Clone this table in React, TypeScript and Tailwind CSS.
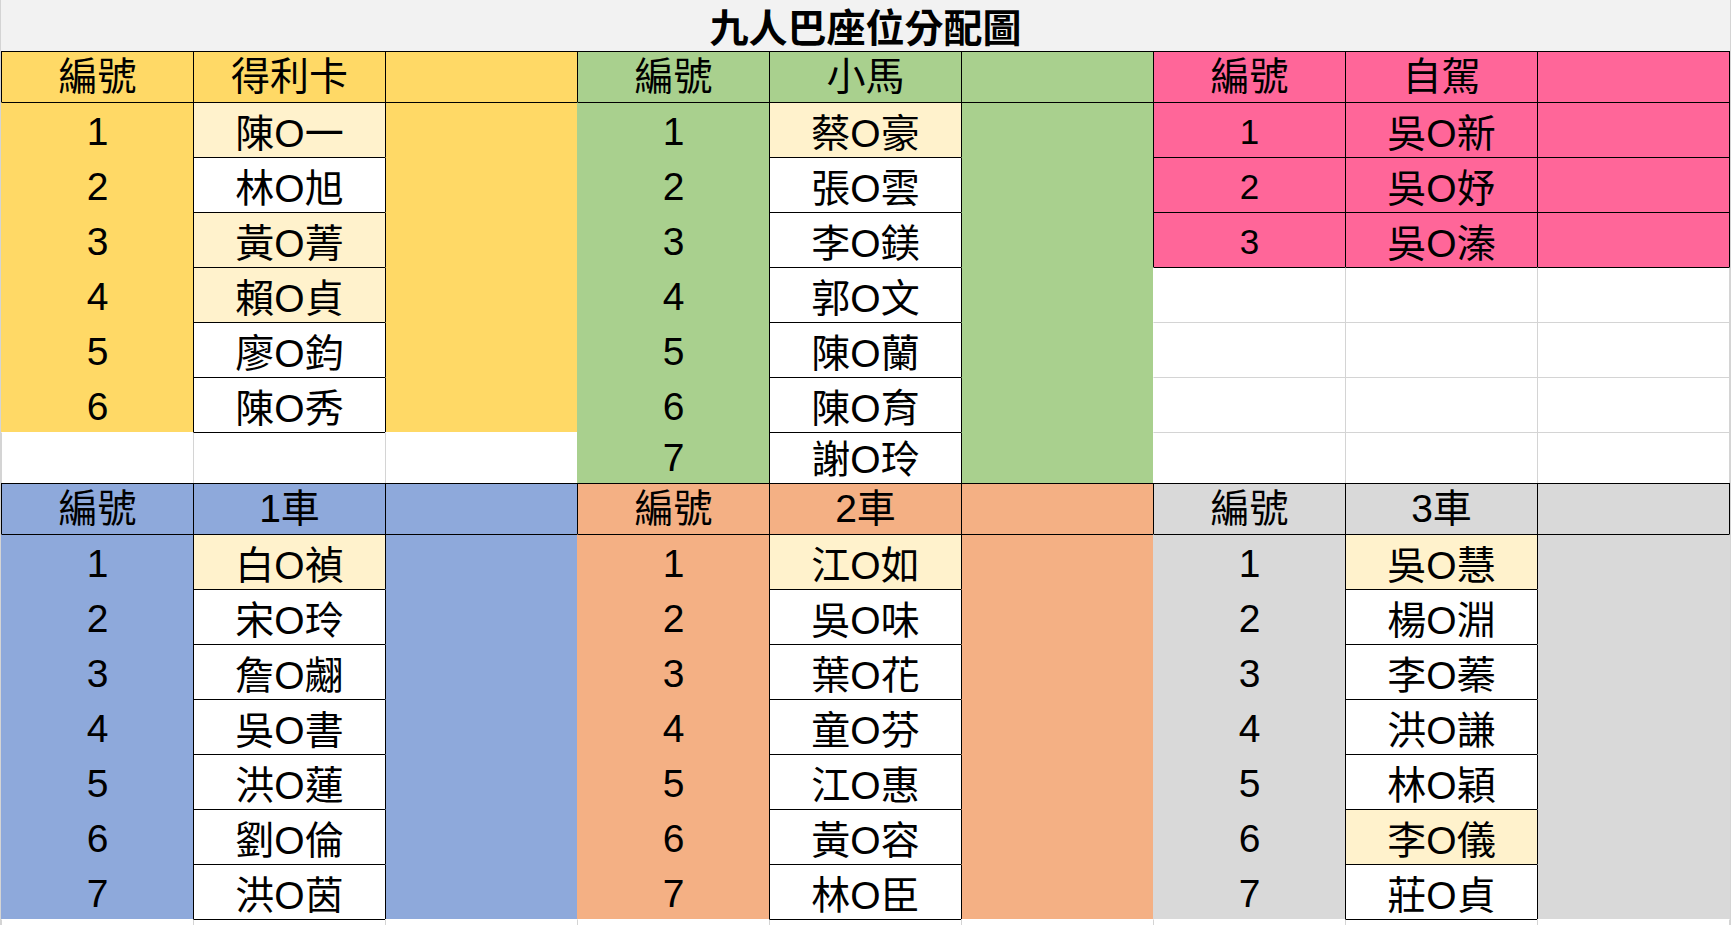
import type { ReactNode } from "react";

type Kind = "num" | "small" | "head" | "name";

interface Cell {
    bg: string | null;
    boxed: boolean;
    text?: ReactNode;
    kind?: Kind;
}

interface Section {
    color: string;
    title: string;
    names: [string, boolean][];
    allBoxed?: boolean;
}

const BG: Record<string, string> = {
    yellow: "bg-[#ffd966]",
    green: "bg-[#a9d08e]",
    pink: "bg-[#ff6699]",
    blue: "bg-[#8ea9db]",
    orange: "bg-[#f4b084]",
    gray: "bg-[#d9d9d9]",
    cream: "bg-[#fff2cc]",
    white: "bg-white",
};

const TOP = { black: "border-t-black", grid: "border-t-[#d4d4d4]", none: "border-t-transparent" };
const LEFT = { black: "border-l-black", grid: "border-l-[#d4d4d4]", none: "border-l-transparent" };
const RIGHT = { black: "border-r border-r-black", grid: "border-r border-r-[#d4d4d4]", none: "border-r border-r-transparent" };

const TEXT: Record<Kind, string> = {
    num: "text-[39px] leading-[39px] pb-[6px]",
    small: "text-[35px] leading-[35px] pb-[8px]",
    head: "text-[39px] leading-[39px] pb-[6px]",
    name: "text-[39px] leading-[39px] pb-[4px]",
};

const topBand: Section[] = [
    {
        color: "yellow",
        title: "得利卡",
        names: [["陳O一", true], ["林O旭", false], ["黃O菁", true], ["賴O貞", true], ["廖O鈞", false], ["陳O秀", false]],
    },
    {
        color: "green",
        title: "小馬",
        names: [["蔡O豪", true], ["張O雲", false], ["李O鎂", false], ["郭O文", false], ["陳O蘭", false], ["陳O育", false], ["謝O玲", false]],
    },
    {
        color: "pink",
        title: "自駕",
        names: [["吳O新", false], ["吳O妤", false], ["吳O溱", false]],
        allBoxed: true,
    },
];

const bottomBand: Section[] = [
    {
        color: "blue",
        title: "1車",
        names: [["白O禎", true], ["宋O玲", false], ["詹O翽", false], ["吳O書", false], ["洪O蓮", false], ["劉O倫", false], ["洪O茵", false]],
    },
    {
        color: "orange",
        title: "2車",
        names: [["江O如", true], ["吳O味", false], ["葉O花", false], ["童O芬", false], ["江O惠", false], ["黃O容", false], ["林O臣", false]],
    },
    {
        color: "gray",
        title: "3車",
        names: [["吳O慧", true], ["楊O淵", false], ["李O蓁", false], ["洪O謙", false], ["林O穎", false], ["李O儀", true], ["莊O貞", false]],
    },
];

const blank = (): Cell => ({ bg: null, boxed: false });

const bandRows = (sections: Section[]): Cell[][] => {
    const rows: Cell[][] = [];

    rows.push(
        sections.flatMap((s) => [
            { bg: s.color, boxed: true, text: "編號", kind: "head" as Kind },
            { bg: s.color, boxed: true, text: s.title, kind: "head" as Kind },
            { bg: s.color, boxed: true },
        ]),
    );

    for (let i = 0; i < 7; i++) {
        rows.push(
            sections.flatMap((s) => {
                if (i >= s.names.length)
                    return [blank(), blank(), blank()];

                const [name, highlight] = s.names[i];

                return [
                    { bg: s.color, boxed: !!s.allBoxed, text: String(i + 1), kind: (s.allBoxed ? "small" : "num") as Kind },
                    { bg: s.allBoxed ? s.color : highlight ? "cream" : "white", boxed: true, text: name, kind: "name" as Kind },
                    { bg: s.color, boxed: !!s.allBoxed },
                ];
            }),
        );
    }

    return rows;
};

const grid: Cell[][] = [...bandRows(topBand), ...bandRows(bottomBand), Array.from({ length: 9 }, blank)];

// gridline between two cells: black if either is boxed, grey if both are empty, otherwise hidden by the fill
const line = (a?: Cell, b?: Cell): "black" | "grid" | "none" => {
    if (a?.boxed || b?.boxed)
        return "black";
    if (!a?.bg && !b?.bg)
        return "grid";
    return "none";
};

export default function App() {
    return (
        <div className="flex h-[925px] w-[1733px] overflow-hidden bg-white font-['Liberation_Sans','Noto_Sans_CJK_TC',sans-serif] text-black">
            <div className="w-px shrink-0 bg-[#d4d4d4]" />

            <div className="flex w-[1729px] shrink-0 flex-col">
                <div className="flex h-[51px] items-center justify-center bg-[#f2f2f2] font-['Noto_Sans_CJK_TC',sans-serif] text-[39px] leading-[51px] font-bold">
                    九人巴座位分配圖
                </div>

                <div className="grid grid-cols-[repeat(8,192px)_193px] grid-rows-[51px_repeat(6,55px)_51px_51px_repeat(7,55px)_6px]">
                    {grid.map((row, r) =>
                        row.map((cell, c) => {
                            const top = r === 0 ? (cell.boxed ? "black" : "none") : line(cell, grid[r - 1][c]);
                            const left = c === 0 ? (cell.boxed ? "black" : cell.bg ? "none" : "grid") : line(cell, row[c - 1]);
                            const right = c === 8 ? RIGHT[line(cell, undefined)] : "";

                            return (
                                <div
                                    className={`flex items-end justify-center overflow-hidden border-t border-l ${TOP[top]} ${LEFT[left]} ${right} ${cell.bg ? BG[cell.bg] : "bg-white"} ${cell.kind ? TEXT[cell.kind] : ""}`}
                                    key={`${r}-${c}`}
                                >
                                    {cell.text}
                                </div>
                            );
                        }),
                    )}
                </div>
            </div>

            <div className="w-px shrink-0 bg-[#d4d4d4]" />
        </div>
    );
}
